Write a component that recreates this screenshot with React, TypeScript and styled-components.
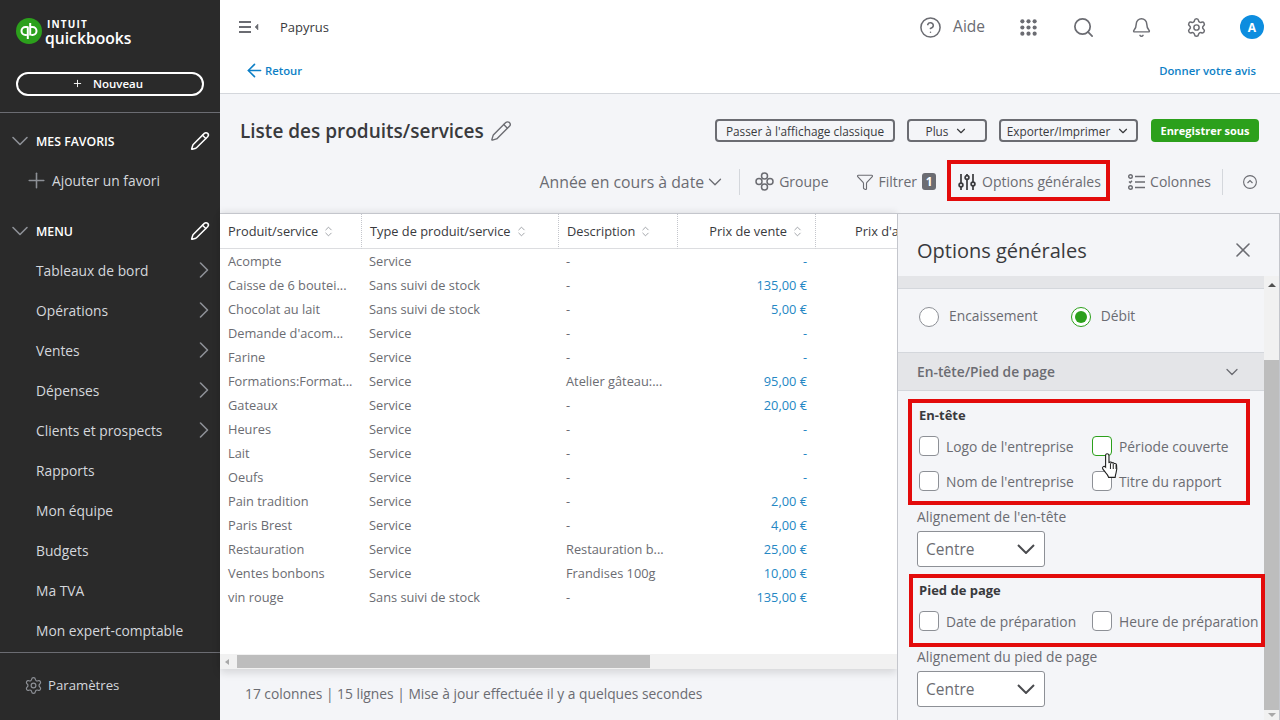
import * as React from "react";
import styled, { createGlobalStyle } from "styled-components";
import {
  ArrowLeft,
  Bell,
  ChevronDown,
  ChevronRight,
  ChevronsUpDown,
  CircleHelp,
  Funnel,
  Pencil,
  Plus,
  Search,
  Settings,
  X,
} from "lucide-react";

const GlobalStyle = createGlobalStyle`
  html, body { margin: 0; padding: 0; height: 720px; overflow: hidden; }
  body { font-family: "Open Sans", "Noto Sans", sans-serif; color: #393a3d; }
  * { box-sizing: border-box; }
`;

const Page = styled.div`
  display: flex;
  width: 1280px;
  height: 720px;
  overflow: hidden;
  background: #f4f5f8;
`;

/* sidebar */
const Sidebar = styled.aside`
  width: 220px;
  flex-shrink: 0;
  background: #2a2a2a;
  display: flex;
  flex-direction: column;
  color: #d4d7dc;
`;
const LogoRow = styled.div`
  height: 72px;
  padding: 18px 0 0 16px;
  display: flex;
  gap: 3px;
`;
const LogoText = styled.div`
  display: flex;
  flex-direction: column;
  color: #fff;
`;
const Intuit = styled.span`
  font: 700 10px/11px "Open Sans", sans-serif;
  letter-spacing: 1.2px;
  margin-left: 2px;
  padding-top: 1px;
`;
const Quickbooks = styled.span`
  font: 600 15.7px/16px "Open Sans", sans-serif;
`;
const NewButton = styled.button`
  margin: 0 16px;
  height: 24px;
  border: 2px solid #fff;
  border-radius: 12px;
  background: transparent;
  color: #fff;
  font: 600 11.5px "Open Sans", sans-serif;
  display: flex;
  align-items: center;
  justify-content: center;
  gap: 10px;
  padding: 0 5px 1px 0;
`;
const SideDivider = styled.div<{ $top: number }>`
  height: 1px;
  background: #6b6c72;
  margin-top: ${(p) => p.$top}px;
`;
const SectionHead = styled.div<{ $top: number }>`
  display: flex;
  align-items: center;
  height: 20px;
  margin-top: ${(p) => p.$top}px;
  padding: 0 10px 0 6px;
  color: #fff;
  font-size: 12.3px;
  font-weight: 600;
  gap: 2px;
  span { flex: 1; }
`;
const AddFavorite = styled.div`
  display: flex;
  align-items: center;
  gap: 3px;
  height: 20px;
  margin-top: 19px;
  padding-left: 24px;
  font-size: 13.8px;
`;
const NavList = styled.nav`
  margin-top: 9px;
  display: flex;
  flex-direction: column;
`;
const NavItem = styled.div`
  height: 40px;
  display: flex;
  align-items: center;
  justify-content: space-between;
  padding: 0 2px 0 36px;
  font-size: 13.8px;
`;
const SettingsRow = styled.div`
  margin-top: 22px;
  display: flex;
  align-items: center;
  gap: 5px;
  padding-left: 24px;
  font-size: 13.2px;
  height: 20px;
`;

/* main */
const Main = styled.main`
  flex: 1;
  min-width: 0;
  display: flex;
  flex-direction: column;
`;
const Header = styled.header`
  height: 94px;
  background: #fff;
  border-bottom: 1px solid #d4d7dc;
  flex-shrink: 0;
`;
const TopRow = styled.div`
  height: 54px;
  display: flex;
  align-items: center;
  padding: 0 16px 0 19px;
  color: #6b6c72;
`;
const Company = styled.span`
  margin-left: 21px;
  font-size: 13px;
  color: #393a3d;
  flex: 1;
`;
const HelpLabel = styled.span`
  font-size: 15.5px;
  margin: -3px 35px 0 11px;
`;
const TopIcon = styled.span<{ $gap: number }>`
  display: flex;
  margin-right: ${(p) => p.$gap}px;
`;
const Avatar = styled.span`
  width: 24px;
  height: 24px;
  border-radius: 50%;
  background: #0d8ddf;
  color: #fff;
  font-size: 12px;
  font-weight: 700;
  display: flex;
  align-items: center;
  justify-content: center;
`;
const BackRow = styled.div`
  height: 32px;
  display: flex;
  align-items: center;
  justify-content: space-between;
  padding: 0 24px 0 24px;
`;
const BlueLink = styled.a`
  display: flex;
  align-items: center;
  color: #0d7fc6;
  font-size: 11.3px;
  font-weight: 600;
`;
const TitleRow = styled.div`
  height: 66px;
  flex-shrink: 0;
  padding: 24px 21px 0 20px;
  display: flex;
  align-items: flex-start;
  justify-content: space-between;
`;
const Title = styled.h1`
  margin: 0;
  display: flex;
  align-items: center;
  gap: 6px;
  height: 26px;
  font-size: 19px;
  font-weight: 600;
  color: #393a3d;
`;
const Actions = styled.div`
  display: flex;
  margin-top: 1px;
`;
const OutlineButton = styled.button<{ $w: number; $mr: number }>`
  width: ${(p) => p.$w}px;
  margin-right: ${(p) => p.$mr}px;
  height: 23px;
  padding: 0;
  background: transparent;
  border: 2px solid #6b6c72;
  border-radius: 4px;
  display: flex;
  align-items: center;
  justify-content: center;
  gap: 6px;
  font: 400 11.8px "Open Sans", sans-serif;
  color: #393a3d;
`;
const SaveButton = styled.button`
  width: 108px;
  height: 23px;
  padding: 0;
  border: 0;
  border-radius: 4px;
  background: #2ca01c;
  color: #fff;
  font: 700 11px "Open Sans", sans-serif;
`;
const Toolbar = styled.div`
  height: 41px;
  flex-shrink: 0;
  display: flex;
  align-items: center;
  justify-content: flex-end;
  padding: 2px 23px 0 0;
  color: #6b6c72;
  font-size: 14px;
`;
const ToolItem = styled.div<{ $ml: number }>`
  display: flex;
  align-items: center;
  gap: 5px;
  margin-left: ${(p) => p.$ml}px;
  white-space: nowrap;
`;
const PeriodPicker = styled(ToolItem)`
  font-size: 15.8px;
  gap: 0;
`;
const ToolSep = styled.div<{ $ml: number }>`
  width: 1px;
  height: 26px;
  background: #d4d7dc;
  margin-left: ${(p) => p.$ml}px;
`;
const Badge = styled.span`
  width: 14px;
  height: 17px;
  border-radius: 3px;
  background: #6b6c72;
  color: #fff;
  font-size: 12px;
  font-weight: 700;
  display: flex;
  align-items: center;
  justify-content: center;
`;
const RedBox = styled.div`
  border: 4px solid #e30b0b;
`;
const OptionsTool = styled(RedBox)`
  width: 163px;
  height: 41px;
  margin: -2px 0 0 11px;
  display: flex;
  align-items: center;
  gap: 6px;
  padding: 2px 0 0 7px;
`;

/* report area */
const Body = styled.div`
  flex: 1;
  min-height: 0;
  display: flex;
  margin-top: 12px;
`;
const TableColumn = styled.div`
  width: 677px;
  flex-shrink: 0;
  display: flex;
  flex-direction: column;
`;
const TableCard = styled.div`
  height: 456px;
  background: #fff;
  border-top: 1px solid #c4c6cc;
  box-shadow: 0 -3px 6px rgba(0, 0, 0, 0.05), 0 4px 8px rgba(0, 0, 0, 0.12);
  overflow: hidden;
  display: flex;
  flex-direction: column;
`;
const Grid = styled.div`
  flex: 1;
  display: grid;
  grid-template-columns: 142px 197px 119px 138px 81px;
  grid-template-rows: 35px;
  grid-auto-rows: 24px;
  align-content: start;
  font-size: 12.8px;
  color: #6b6c72;
`;
const HeadCell = styled.div<{ $right?: boolean; $last?: boolean }>`
  display: flex;
  align-items: center;
  justify-content: ${(p) => (p.$right ? "flex-end" : "flex-start")};
  gap: 4px;
  padding: ${(p) => (p.$right ? "0 11px 0 8px" : p.$last ? "0 0 0 39px" : "0 8px")};
  border-bottom: 1px solid #dcdde0;
  border-right: ${(p) => (p.$last ? "0" : "1px dotted #c4c6cc")};
  color: #393a3d;
  white-space: nowrap;
  overflow: hidden;
`;
const Cell = styled.div<{ $amount?: boolean; $first?: boolean }>`
  display: flex;
  align-items: center;
  padding: 0 ${(p) => (p.$amount ? "9px" : "8px")} 0 ${(p) => (p.$first ? "8px" : "7px")};
  white-space: nowrap;
  justify-content: ${(p) => (p.$amount ? "flex-end" : "flex-start")};
  color: ${(p) => (p.$amount ? "#2487c4" : "#6b6c72")};
`;
const HScroll = styled.div`
  height: 15px;
  background: #f1f1f1;
  display: flex;
  align-items: center;
  padding-left: 5px;
  flex-shrink: 0;
`;
const ArrowLeftTri = styled.span`
  width: 0;
  height: 0;
  border-style: solid;
  border-width: 3.5px 4px 3.5px 0;
  border-color: transparent #a8a8a8 transparent transparent;
  margin-right: 8px;
`;
const HThumb = styled.div`
  width: 413px;
  height: 13px;
  background: #bdbdbd;
`;
const Footer = styled.div`
  padding: 15px 0 0 25px;
  font-size: 13.8px;
  color: #6b6c72;
`;

/* options panel */
const Panel = styled.section`
  flex: 1;
  min-width: 0;
  display: flex;
  flex-direction: column;
  border: 1px solid #c4c6cc;
  border-width: 1px 1px 0 1px;
  background: #f4f5f8;
`;
const PanelHead = styled.div`
  height: 62px;
  flex-shrink: 0;
  display: flex;
  align-items: center;
  justify-content: space-between;
  padding: 19px 24px 9px 19px;
  font-size: 20px;
  color: #393a3d;
`;
const PanelBody = styled.div`
  flex: 1;
  min-height: 0;
  display: flex;
`;
const PanelContent = styled.div`
  width: 366px;
  flex-shrink: 0;
  display: flex;
  flex-direction: column;
  font-size: 13.8px;
  color: #6b6c72;
`;
const Strip = styled.div`
  height: 13px;
  flex-shrink: 0;
  background: #e4e5e8;
  border-bottom: 1px solid #d4d7dc;
`;
const RadioRow = styled.div`
  height: 63px;
  flex-shrink: 0;
  display: flex;
  align-items: center;
  padding: 0 0 8px 21px;
`;
const Radio = styled.span<{ $on?: boolean }>`
  width: 20px;
  height: 20px;
  border-radius: 50%;
  flex-shrink: 0;
  background: #fff;
  border: 1px solid ${(p) => (p.$on ? "#2ca01c" : "#8d9096")};
  padding: 3px;
  margin-right: 10px;
  &::after {
    content: "";
    display: ${(p) => (p.$on ? "block" : "none")};
    width: 100%;
    height: 100%;
    border-radius: 50%;
    background: #2ca01c;
  }
`;
const RadioLabel = styled.span`
  margin: -3px 33px 0 0;
`;
const Accordion = styled.div`
  height: 39px;
  flex-shrink: 0;
  background: #e4e5e8;
  border: 1px solid #d4d7dc;
  border-width: 1px 0;
  display: flex;
  align-items: center;
  justify-content: space-between;
  padding: 0 22px 0 19px;
  font-weight: 600;
`;
const OptionBox = styled(RedBox)<{ $w: number; $h: number; $top: number; $ml: number; $pad: number }>`
  width: ${(p) => p.$w}px;
  height: ${(p) => p.$h}px;
  margin: ${(p) => p.$top}px 0 0 ${(p) => p.$ml}px;
  padding: 4px 0 0 ${(p) => p.$pad}px;
  flex-shrink: 0;
  position: relative;
`;
const BoxTitle = styled.div`
  font-weight: 700;
  font-size: 13px;
  line-height: 16px;
  color: #393a3d;
`;
const CheckGrid = styled.div`
  display: grid;
  grid-template-columns: 173px auto;
  grid-auto-rows: 20px;
  row-gap: 15px;
  margin-top: 13px;
`;
const CheckItem = styled.label`
  display: flex;
  align-items: center;
  gap: 7px;
  white-space: nowrap;
`;
const CheckBox = styled.span<{ $hover?: boolean }>`
  width: 20px;
  height: 20px;
  flex-shrink: 0;
  border-radius: 4px;
  background: #fff;
  border: 1px solid ${(p) => (p.$hover ? "#2ca01c" : "#8d9096")};
`;
const FieldLabel = styled.div<{ $top: number }>`
  margin: ${(p) => p.$top}px 0 0 19px;
  line-height: 18px;
  flex-shrink: 0;
`;
const SelectBox = styled.div`
  width: 128px;
  height: 36px;
  flex-shrink: 0;
  margin: 5px 0 0 19px;
  background: #fff;
  border: 1px solid #8d9096;
  border-radius: 3px;
  display: flex;
  align-items: center;
  justify-content: space-between;
  padding: 0 9px 0 8px;
  font-size: 15.5px;
`;
const VScroll = styled.div`
  flex: 1;
  background: #f1f1f1;
  display: flex;
  flex-direction: column;
  align-items: center;
  padding-top: 7px;
`;
const ArrowUpTri = styled.span`
  width: 0;
  height: 0;
  border-style: solid;
  border-width: 0 4px 4px 4px;
  border-color: transparent transparent #505050 transparent;
`;
const ArrowDownTri = styled.span`
  width: 0;
  height: 0;
  border-style: solid;
  border-width: 4px 4px 0 4px;
  border-color: #a8a8a8 transparent transparent transparent;
  margin-top: 3px;
`;
const VThumb = styled.div`
  width: 100%;
  height: 350px;
  margin-top: 73px;
  background: #bdbdbd;
`;
const HandCursor = styled.svg`
  position: absolute;
  left: 189px;
  top: 49px;
`;

const LogoMark = () => (
  <svg width="26" height="26" viewBox="0 0 26 26">
    <circle cx="13" cy="13" r="13" fill="#2ca01c" />
    <g fill="none" stroke="#fff" strokeWidth="2">
      <path d="M11.800 8.500V21M11.800 9H9.500a4 4 0 0 0 0 8h1.200" />
      <path d="M14.200 17.500V5M14.200 9h2.300a4 4 0 0 1 0 8h-1.200" />
    </g>
  </svg>
);

const MenuToggle = () => (
  <svg width="20" height="14" viewBox="0 0 20 14" fill="none" stroke="#6b6c72" strokeWidth="2">
    <path d="M0 2h12M0 7h12M0 12h12" />
    <path d="M19 4v6l-3-3z" fill="#6b6c72" strokeWidth="0.5" />
  </svg>
);

const AppsGrid = () => (
  <svg width="17" height="17" viewBox="0 0 18 18" fill="#6b6c72">
    {[2.5, 9, 15.5].flatMap((y) =>
      [2.5, 9, 15.5].map((x) => <circle key={`${x}-${y}`} cx={x} cy={y} r="2.2" />)
    )}
  </svg>
);

const GroupIcon = () => (
  <svg width="19" height="19" viewBox="0 0 19 19" fill="none" stroke="#6b6c72" strokeWidth="1.5">
    <circle cx="9.500" cy="4" r="3" />
    <circle cx="4" cy="9.500" r="3" />
    <circle cx="15" cy="9.500" r="3" />
    <circle cx="9.500" cy="15" r="3" />
  </svg>
);

const SlidersIcon = () => (
  <svg width="18" height="18" viewBox="0 0 18 18" fill="none" stroke="#393a3d" strokeWidth="1.7">
    <path d="M3 1v9M3 14v3M9 1v1M9 7v10M15 1v8M15 13v4" />
    <circle cx="3" cy="12" r="1.900" />
    <circle cx="9" cy="4.500" r="1.900" />
    <circle cx="15" cy="11" r="1.900" />
  </svg>
);

const ColumnsIcon = () => (
  <svg width="17" height="16" viewBox="0 0 17 16" fill="none" stroke="#6b6c72" strokeWidth="1.4">
    <circle cx="2.500" cy="2.500" r="1.800" />
    <path d="M1 7.500l1.300 1.300L4 6.800" />
    <circle cx="2.500" cy="13.500" r="1.800" />
    <path d="M7 2.500h10M7 8h10M7 13.500h10" />
  </svg>
);

const SelectChevron = () => (
  <svg width="18" height="10" viewBox="0 0 18 10" fill="none" stroke="#4a4b4f" strokeWidth="2">
    <path d="M1 1l8 8 8-8" />
  </svg>
);

const Hand = () => (
  <HandCursor width="20" height="27" viewBox="0 0 17 24">
    <path
      d="M5 1.500c1 0 1.700.7 1.700 1.800v6l1-.3c.8-.2 1.400.1 1.700.7.8-.4 1.600-.2 2 .6.900-.3 1.800.2 2 1.100.4 2.500.3 5-.4 7.200-.5 1.600-.7 2.800-.8 3.900H6.400c-.4-1.500-1.300-2.600-2.500-3.900L1.300 15.300c-.6-.9-.4-1.800.3-2.300.8-.5 1.500-.2 2.100.4V3.300C3.600 2.200 4.200 1.500 5 1.500z"
      fill="#fff"
      stroke="#222"
      strokeWidth="1"
    />
    <path d="M8 10v5M10.500 10.500v4.500M13 11.500v3.500" stroke="#222" strokeWidth="0.9" />
  </HandCursor>
);

const navItems: [string, boolean][] = [
  ["Tableaux de bord", true],
  ["Opérations", true],
  ["Ventes", true],
  ["Dépenses", true],
  ["Clients et prospects", true],
  ["Rapports", false],
  ["Mon équipe", false],
  ["Budgets", false],
  ["Ma TVA", false],
  ["Mon expert-comptable", false],
];

const rows: [string, string, string, string][] = [
  ["Acompte", "Service", "-", "-"],
  ["Caisse de 6 boutei...", "Sans suivi de stock", "-", "135,00 €"],
  ["Chocolat au lait", "Sans suivi de stock", "-", "5,00 €"],
  ["Demande d'acom...", "Service", "-", "-"],
  ["Farine", "Service", "-", "-"],
  ["Formations:Format...", "Service", "Atelier gâteau:...", "95,00 €"],
  ["Gateaux", "Service", "-", "20,00 €"],
  ["Heures", "Service", "-", "-"],
  ["Lait", "Service", "-", "-"],
  ["Oeufs", "Service", "-", "-"],
  ["Pain tradition", "Service", "-", "2,00 €"],
  ["Paris Brest", "Service", "-", "4,00 €"],
  ["Restauration", "Service", "Restauration b...", "25,00 €"],
  ["Ventes bonbons", "Service", "Frandises 100g", "10,00 €"],
  ["vin rouge", "Sans suivi de stock", "-", "135,00 €"],
];

const SortIcon = () => <ChevronsUpDown size={13} color="#8d9096" strokeWidth={1.5} />;

export default function App() {
  return (
    <Page>
      <GlobalStyle />
      <Sidebar>
        <LogoRow>
          <LogoMark />
          <LogoText>
            <Intuit>INTUIT</Intuit>
            <Quickbooks>quickbooks</Quickbooks>
          </LogoText>
        </LogoRow>
        <NewButton>
          <Plus size={11} strokeWidth={2} />
          Nouveau
        </NewButton>
        <SideDivider $top={16} />
        <SectionHead $top={18}>
          <ChevronDown size={28} color="#8d9096" strokeWidth={1.4} />
          <span>MES FAVORIS</span>
          <Pencil size={20} color="#fff" strokeWidth={1.8} />
        </SectionHead>
        <AddFavorite>
          <Plus size={25} color="#8d9096" strokeWidth={1.5} />
          Ajouter un favori
        </AddFavorite>
        <SectionHead $top={31}>
          <ChevronDown size={28} color="#8d9096" strokeWidth={1.4} />
          <span>MENU</span>
          <Pencil size={20} color="#fff" strokeWidth={1.8} />
        </SectionHead>
        <NavList>
          {navItems.map(([label, more]) => (
            <NavItem key={label}>
              {label}
              {more && <ChevronRight size={28} color="#8d9096" strokeWidth={1.4} />}
            </NavItem>
          ))}
        </NavList>
        <SideDivider $top={2} />
        <SettingsRow>
          <Settings size={19} color="#8d9096" strokeWidth={1.5} />
          Paramètres
        </SettingsRow>
      </Sidebar>

      <Main>
        <Header>
          <TopRow>
            <MenuToggle />
            <Company>Papyrus</Company>
            <CircleHelp size={23} strokeWidth={1.6} />
            <HelpLabel>Aide</HelpLabel>
            <TopIcon $gap={35}>
              <AppsGrid />
            </TopIcon>
            <TopIcon $gap={36}>
              <Search size={23} strokeWidth={1.8} />
            </TopIcon>
            <TopIcon $gap={34}>
              <Bell size={21} strokeWidth={1.7} />
            </TopIcon>
            <TopIcon $gap={33}>
              <Settings size={21} strokeWidth={1.7} />
            </TopIcon>
            <Avatar>A</Avatar>
          </TopRow>
          <BackRow>
            <BlueLink>
              <ArrowLeft size={21} strokeWidth={1.8} />
              Retour
            </BlueLink>
            <BlueLink>Donner votre avis</BlueLink>
          </BackRow>
        </Header>

        <TitleRow>
          <Title>
            Liste des produits/services
            <Pencil size={22} color="#6b6c72" strokeWidth={1.5} />
          </Title>
          <Actions>
            <OutlineButton $w={180} $mr={12}>Passer à l'affichage classique</OutlineButton>
            <OutlineButton $w={80} $mr={12}>
              Plus <ChevronDown size={14} strokeWidth={2} />
            </OutlineButton>
            <OutlineButton $w={139} $mr={13}>
              Exporter/Imprimer <ChevronDown size={14} strokeWidth={2} />
            </OutlineButton>
            <SaveButton>Enregistrer sous</SaveButton>
          </Actions>
        </TitleRow>

        <Toolbar>
          <PeriodPicker $ml={0}>
            Année en cours à date <ChevronDown size={22} strokeWidth={1.4} />
          </PeriodPicker>
          <ToolSep $ml={13} />
          <ToolItem $ml={15}>
            <GroupIcon /> Groupe
          </ToolItem>
          <ToolItem $ml={27}>
            <Funnel size={18} strokeWidth={1.5} /> Filtrer <Badge>1</Badge>
          </ToolItem>
          <OptionsTool>
            <SlidersIcon /> Options générales
          </OptionsTool>
          <ToolItem $ml={18}>
            <ColumnsIcon /> Colonnes
          </ToolItem>
          <ToolSep $ml={11} />
          <ToolItem $ml={20}>
            <svg width="14" height="14" viewBox="0 0 14 14" fill="none" stroke="#6b6c72" strokeWidth="1.1">
              <circle cx="7" cy="7" r="6.400" />
              <path d="M4.500 8l2.500-2.500L9.500 8" />
            </svg>
          </ToolItem>
        </Toolbar>

        <Body>
          <TableColumn>
            <TableCard>
              <Grid>
                <HeadCell>Produit/service <SortIcon /></HeadCell>
                <HeadCell>Type de produit/service <SortIcon /></HeadCell>
                <HeadCell>Description <SortIcon /></HeadCell>
                <HeadCell $right>Prix de vente <SortIcon /></HeadCell>
                <HeadCell $last>Prix d'achat</HeadCell>
                {rows.map((r) => (
                  <React.Fragment key={r[0]}>
                    <Cell $first>{r[0]}</Cell>
                    <Cell>{r[1]}</Cell>
                    <Cell>{r[2]}</Cell>
                    <Cell $amount>{r[3]}</Cell>
                    <Cell />
                  </React.Fragment>
                ))}
              </Grid>
              <HScroll>
                <ArrowLeftTri />
                <HThumb />
              </HScroll>
            </TableCard>
            <Footer>17 colonnes | 15 lignes | Mise à jour effectuée il y a quelques secondes</Footer>
          </TableColumn>

          <Panel>
            <PanelHead>
              Options générales
              <X size={24} color="#6b6c72" strokeWidth={1.6} />
            </PanelHead>
            <PanelBody>
              <PanelContent>
                <Strip />
                <RadioRow>
                  <Radio />
                  <RadioLabel>Encaissement</RadioLabel>
                  <Radio $on />
                  <RadioLabel>Débit</RadioLabel>
                </RadioRow>
                <Accordion>
                  En-tête/Pied de page
                  <ChevronDown size={20} strokeWidth={1.5} />
                </Accordion>
                <OptionBox $w={342} $h={106} $top={8} $ml={10} $pad={7}>
                  <BoxTitle>En-tête</BoxTitle>
                  <CheckGrid>
                    <CheckItem><CheckBox />Logo de l'entreprise</CheckItem>
                    <CheckItem><CheckBox $hover />Période couverte</CheckItem>
                    <CheckItem><CheckBox />Nom de l'entreprise</CheckItem>
                    <CheckItem><CheckBox />Titre du rapport</CheckItem>
                  </CheckGrid>
                  <Hand />
                </OptionBox>
                <FieldLabel $top={3}>Alignement de l'en-tête</FieldLabel>
                <SelectBox>
                  Centre <SelectChevron />
                </SelectBox>
                <OptionBox $w={356} $h={73} $top={7} $ml={11} $pad={6}>
                  <BoxTitle>Pied de page</BoxTitle>
                  <CheckGrid>
                    <CheckItem><CheckBox />Date de préparation</CheckItem>
                    <CheckItem><CheckBox />Heure de préparation</CheckItem>
                  </CheckGrid>
                </OptionBox>
                <FieldLabel $top={1}>Alignement du pied de page</FieldLabel>
                <SelectBox>
                  Centre <SelectChevron />
                </SelectBox>
              </PanelContent>
              <VScroll>
                <ArrowUpTri />
                <VThumb />
                <ArrowDownTri />
              </VScroll>
            </PanelBody>
          </Panel>
        </Body>
      </Main>
    </Page>
  );
}
